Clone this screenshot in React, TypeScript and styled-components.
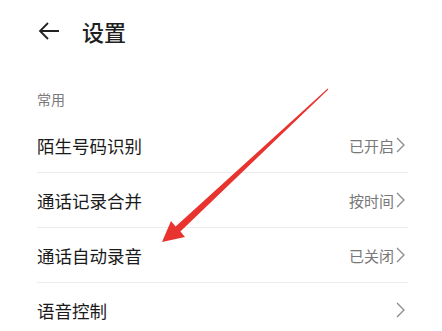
import React from "react";
import styled, { createGlobalStyle } from "styled-components";

const Global = createGlobalStyle`
  html, body { margin: 0; padding: 0; background: #ffffff; }
  body { font-family: "Noto Sans CJK SC", "Noto Sans", sans-serif; }
`;

const Page = styled.div`
  position: relative;
  width: 442px;
  height: 331px;
  overflow: hidden;
  background: #ffffff;
`;

const Header = styled.div`
  display: flex;
  align-items: center;
  height: 62px;
  padding-left: 38px;
  gap: 22px;
`;

const Title = styled.div`
  font-size: 22px;
  font-weight: 500;
  color: #1f1f1f;
  line-height: 1;
`;

const Section = styled.div`
  padding: 0 34px 0 37px;
`;

const SectionLabel = styled.div`
  box-sizing: border-box;
  font-size: 14px;
  color: #7a7a7a;
  height: 56px;
  padding-top: 18px;
  line-height: 1;
  display: flex;
  align-items: center;
`;

const Row = styled.div<{ $last?: boolean }>`
  display: flex;
  align-items: center;
  justify-content: space-between;
  height: 54px;
  border-bottom: ${(p) => (p.$last ? "none" : "1px solid #ececec")};
`;

const Label = styled.div`
  font-size: 17.5px;
  color: #1a1a1a;
`;

const Value = styled.div`
  display: flex;
  align-items: center;
  font-size: 15px;
  color: #787878;
  gap: 1px;
  padding-right: 2px;
`;

const Overlay = styled.svg`
  position: absolute;
  left: 0;
  top: 0;
  pointer-events: none;
`;

const Chevron = () => (
  <svg width="11" height="16" viewBox="0 0 11 16">
    <path d="M2 1 L9 8 L2 15" fill="none" stroke="#8a8a8a" strokeWidth="1.3" />
  </svg>
);

const BackArrow = () => (
  <svg width="22" height="20" viewBox="0 0 22 20">
    <path d="M10 2 L2 10 L10 18 M2 10 H21" fill="none" stroke="#222" strokeWidth="1.8" />
  </svg>
);

const rows = [
  { label: "陌生号码识别", value: "已开启" },
  { label: "通话记录合并", value: "按时间" },
  { label: "通话自动录音", value: "已关闭" },
  { label: "语音控制", value: "" },
];

export default function App() {
  return (
    <Page>
      <Global />
      <Header>
        <BackArrow />
        <Title>设置</Title>
      </Header>
      <Section>
        <SectionLabel>常用</SectionLabel>
        {rows.map((r, i) => (
          <Row key={r.label} $last={i === rows.length - 1}>
            <Label>{r.label}</Label>
            <Value>
              {r.value}
              <Chevron />
            </Value>
          </Row>
        ))}
      </Section>
      <Overlay width="442" height="331" viewBox="0 0 442 331">
        <polygon
          points="162,242 171,221 175.6,226.4 327.7,88.6 328.3,89.4 180.4,231.6 185,237"
          fill="#e8332f"
        />
      </Overlay>
    </Page>
  );
}
